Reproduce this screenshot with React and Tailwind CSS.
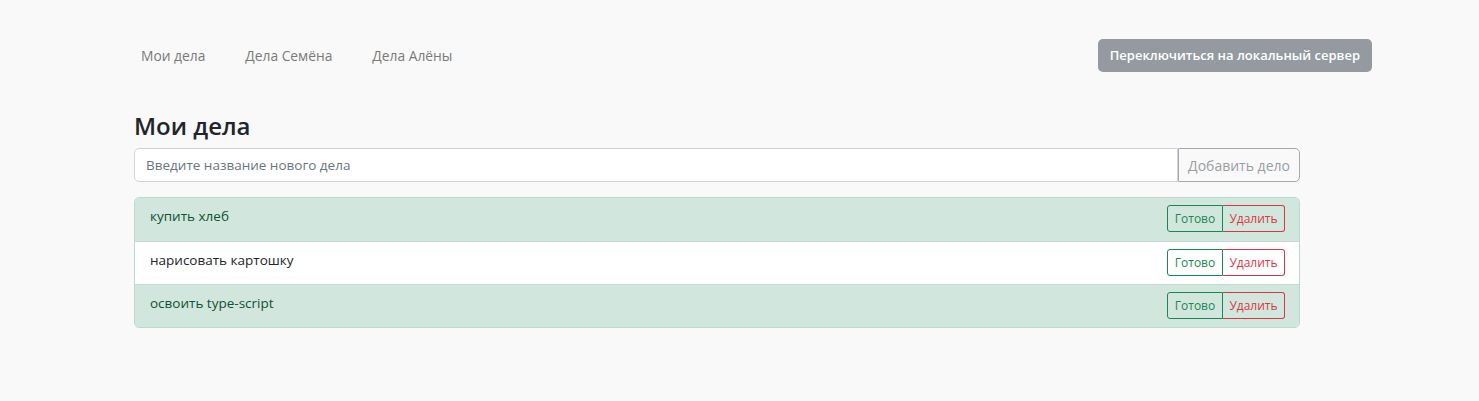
import React, { useState } from 'react';

const initialTodos = [
  { id: 1, title: 'купить хлеб', done: true },
  { id: 2, title: 'нарисовать картошку', done: false },
  { id: 3, title: 'освоить type-script', done: true },
];

export default function App() {
  const [todos, setTodos] = useState(initialTodos);
  const [text, setText] = useState('');

  const navLinks = ['Мои дела', 'Дела Семёна', 'Дела Алёны'];

  const toggle = (id) => setTodos(prev => prev.map(t => (t.id === id ? { ...t, done: !t.done } : t)));
  const remove = (id) => setTodos(prev => prev.filter(t => t.id !== id));
  const add = () => {
    if (!text.trim()) return;
    setTodos(prev => [...prev, { id: Date.now(), title: text.trim(), done: false }]);
    setText('');
  };

  return (
    <div className="min-h-screen bg-[#f9f9f9] text-[#212529] font-['Open_Sans',sans-serif]">
      {/* Navbar */}
      <nav className="flex items-center justify-between pl-[121px] pr-[107px] pt-[39px]">
        <div className="flex items-center">
          {navLinks.map((label) => (
            <a key={label} href="#" className="px-[20px] text-[13.8px] text-[#7a7a7a] leading-[31px]">
              {label}
            </a>
          ))}
        </div>
        <button className="h-[33px] px-[12px] rounded-[5px] bg-[#949a9f] text-white text-[13px] font-semibold">
          Переключиться на локальный сервер
        </button>
      </nav>

      <main className="mx-[134px] w-[1166px] pt-[39px]">
        <h1 className="text-[24px] font-semibold leading-[29px] text-[#212529]">Мои дела</h1>

        {/* Add form */}
        <div className="flex mt-[8px]">
          <input
            value={text}
            onChange={(e) => setText(e.target.value)}
            placeholder="Введите название нового дела"
            className="flex-1 h-[34px] px-[11px] bg-white border border-[#ced4da] rounded-l-[5px] text-[13.5px] placeholder:text-[#6c757d] outline-none"
          />
          <button
            onClick={add}
            className="w-[122px] h-[34px] border border-[#a5a9ad] rounded-r-[5px] text-[14px] text-[#9a9ea3]"
          >
            Добавить дело
          </button>
        </div>

        {/* Todo list */}
        <ul className="mt-[15px] border border-[#badbcc] rounded-[5px] overflow-hidden">
          {todos.map((t, i) => (
            <li
              key={t.id}
              className={`flex justify-between pl-[15px] pr-[14px] pt-[8px] h-[43px] ${
                i > 0 ? 'border-t border-[#c8d8d0]' : ''
              } ${t.done ? 'bg-[#d1e7dd] text-[#0f5132]' : 'bg-white text-[#212529]'}`}
            >
              <span className="text-[13.5px] leading-[20px]">{t.title}</span>
              <div className="flex h-[27px] mt-[-1px]">
                <button
                  onClick={() => toggle(t.id)}
                  className="w-[56px] border border-[#198754] rounded-l-[3px] text-[12px] text-[#198754]"
                >
                  Готово
                </button>
                <button
                  onClick={() => remove(t.id)}
                  className="w-[62px] border border-l-0 border-[#dc3545] rounded-r-[3px] text-[12px] text-[#dc3545]"
                >
                  Удалить
                </button>
              </div>
            </li>
          ))}
        </ul>
      </main>
    </div>
  );
}
